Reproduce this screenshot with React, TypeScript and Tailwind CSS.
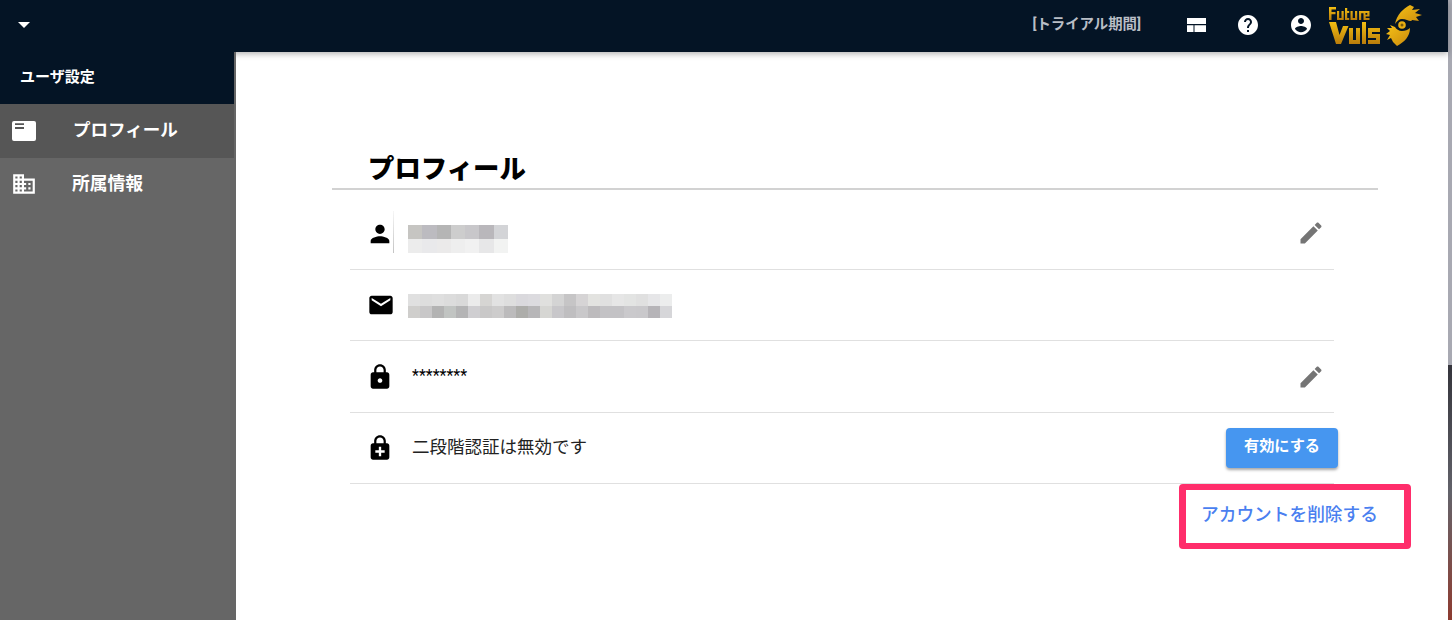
import React from "react";

const font = { fontFamily: '"Roboto", "Noto Sans CJK JP", sans-serif' };

const PersonIcon = () => (
  <svg viewBox="0 0 24 24" className="size-[28px] fill-black mt-[8px] shrink-0">
    <path d="M12 12c2.21 0 4-1.79 4-4s-1.79-4-4-4-4 1.79-4 4 1.79 4 4 4zm0 2c-2.67 0-8 1.34-8 4v2h16v-2c0-2.66-5.33-4-8-4z" />
  </svg>
);

const MailIcon = () => (
  <svg viewBox="0 0 24 24" className="size-[28px] fill-black shrink-0">
    <path d="M20 4H4c-1.1 0-2 .9-2 2v12c0 1.1.9 2 2 2h16c1.1 0 2-.9 2-2V6c0-1.1-.9-2-2-2zm0 4l-8 5-8-5V6l8 5 8-5v2z" />
  </svg>
);

const LockIcon = () => (
  <svg viewBox="0 0 24 24" className="size-[28px] fill-black shrink-0">
    <path d="M18 8h-1V6c0-2.76-2.24-5-5-5S7 3.24 7 6v2H6c-1.1 0-2 .9-2 2v10c0 1.1.9 2 2 2h12c1.1 0 2-.9 2-2V10c0-1.1-.9-2-2-2zm-6 9c-1.1 0-2-.9-2-2s.9-2 2-2 2 .9 2 2-.9 2-2 2zm3.100-9H8.900V6c0-1.710 1.390-3.100 3.100-3.100 1.710 0 3.100 1.390 3.100 3.100v2z" />
  </svg>
);

const EnhancedLockIcon = () => (
  <svg viewBox="0 0 24 24" className="size-[28px] fill-black shrink-0">
    <path d="M18 8h-1V6c0-2.76-2.24-5-5-5S7 3.24 7 6v2H6c-1.100 0-2 .9-2 2v10c0 1.100.9 2 2 2h12c1.100 0 2-.9 2-2V10c0-1.100-.9-2-2-2zM8.900 6c0-1.710 1.390-3.100 3.100-3.100s3.100 1.390 3.100 3.100v2H8.900V6zM16 16h-3v3h-2v-3H8v-2h3v-3h2v3h3v2z" />
  </svg>
);

const PencilIcon = () => (
  <svg viewBox="0 0 24 24" className="size-[28px] fill-[#757575]">
    <path d="M3 17.250V21h3.750L17.810 9.940l-3.750-3.750L3 17.250zM20.710 7.040c.39-.39.39-1.020 0-1.410l-2.340-2.340c-.39-.39-1.020-.39-1.410 0l-1.830 1.830 3.750 3.750 1.830-1.830z" />
  </svg>
);

const Blur = ({ rows, w, h }: { rows: string[][]; w: number; h: number }) => (
  <div className="flex flex-col">
    {rows.map((row, i) => (
      <div key={i} className="flex">
        {row.map((c, j) => (
          <div key={j} style={{ background: c, width: w, height: h }} />
        ))}
      </div>
    ))}
  </div>
);

const nameBlur = [
  ["#c6c5c2", "#bcbbc0", "#b5b5b5", "#cdcdcd", "#c8c7ca", "#b9b7bb", "#d3d4d7"],
  ["#ececec", "#e9e9eb", "#ebeaea", "#eeeeee", "#f1f1f1", "#e7e7e8", "#f2f3f2"],
];

const mailBlur = [
  ["#e0e0e0", "#dddddd", "#dfdfdf", "#dcdcdc", "#d9d9d9", "#ebebeb", "#d6d5d3", "#e2e2e2", "#dedede", "#dad9dd", "#dcdbdf", "#e0e0de", "#d4d4d4", "#c6c5c6", "#d6d4d5", "#e3e3e0", "#e0e0e0", "#e6e6e6", "#e3e4e3", "#e0e0e0", "#e6e6e8", "#eceded"],
  ["#cfcecc", "#c8c7c8", "#b3b3b3", "#c1c4c2", "#b4b4b5", "#cfced1", "#c9c8c8", "#cdcccc", "#bcbbbc", "#adadaa", "#b7b6b8", "#d6d6d3", "#c8c7ca", "#bfbec0", "#c9c8ca", "#bdbbbd", "#c3c2c5", "#c3c2c5", "#cac9cc", "#c9c8cb", "#b6b4b8", "#d6d6d9"],
];

const Logo = () => (
  <svg viewBox="0 0 96 46" className="w-[96px] h-[46px] ml-[14px] mr-[25px] shrink-0">
    <defs>
      <linearGradient id="gold" x1="0" y1="0" x2="0" y2="1">
        <stop offset="0" stopColor="#f4bf12" />
        <stop offset="1" stopColor="#b97c0b" />
      </linearGradient>
      <linearGradient id="blade" x1="0" y1="0" x2="1" y2="1">
        <stop offset="0" stopColor="#f6c117" />
        <stop offset="1" stopColor="#c98a0c" />
      </linearGradient>
    </defs>
    <g fill="url(#gold)">
      <path d="M2 5h7v2.500H4.500v2.500h4v2.200h-4v5.800H2z" />
      <path d="M10 9h2.200v7h2.300V9h2.200v9H10zM18 6h2.200v3h2v2h-2v5h2v2H18zM23.500 9h2.200v7h2.300V9h2.200v9h-6.700zM32 9h5.500v2.200h-3.300V18H32zM38.500 9h4v5.500h-3.800v1.500h3.800v2h-6V9zm0 2v1.700h1.800V11z" />
      <path d="M2 20h7l3.500 13L16 24h5.500l-7.500 18H9z" />
      <path d="M22 26h4v12h3V26h4v16H22zM35 20h4v22h-4zM41 26h12v4h-8v2h8v10H41v-4h8v-2h-8z" />
    </g>
    <g fill="url(#blade)">
      <path d="M68 22C70 12 76 7 83 3l4 2-2 3 8-1-5 4 7 2-6 2 3 4-7-1C84 21 80 17 75 17 72 17 70 19 68 22z" />
      <path d="M83 26C83 35 77 40 70 44l-4-4-2-4-4 2 3-5-4-1 4-3-3-3h5l-2-3 5 2C69 27 72 29 75 29 78 29 81 28 83 26z" />
    </g>
    <circle cx="75" cy="23" r="5" fill="#041425" />
    <circle cx="75" cy="23" r="3.800" fill="#e8ae12" />
    <circle cx="75" cy="23" r="1.500" fill="#7a5a0a" />
  </svg>
);

export default function App() {
  return (
    <div className="h-[620px] w-[1452px] overflow-hidden flex bg-white" style={font}>
      <div className="w-[1448px] shrink-0 flex flex-col">
        <header className="h-[52px] shrink-0 bg-[#041425] flex items-center pb-[2px] z-10 shadow-[0_2px_6px_rgba(0,0,0,0.3)]">
          <div className="ml-[18px] w-0 h-0 border-x-[6px] border-x-transparent border-t-[6px] border-t-white" />
          <span className="ml-auto text-[14.4px] font-bold text-[#b9bec6]">[トライアル期間]</span>
          <svg viewBox="0 0 24 24" className="size-[24px] ml-[44px] fill-white">
            <path d="M2 5h19v6H2zM2 12.300h6.500V19H2zM9.500 12.300H21V19H9.500z" />
          </svg>
          <svg viewBox="0 0 24 24" className="size-[24px] ml-[27px] fill-white">
            <path d="M12 2C6.480 2 2 6.480 2 12s4.480 10 10 10 10-4.480 10-10S17.520 2 12 2zm1 17h-2v-2h2v2zm2.070-7.750l-.9.920C13.450 12.900 13 13.500 13 15h-2v-.5c0-1.100.45-2.100 1.170-2.830l1.240-1.260c.37-.36.59-.86.59-1.410 0-1.100-.9-2-2-2s-2 .9-2 2H8c0-2.210 1.790-4 4-4s4 1.790 4 4c0 .88-.36 1.680-.93 2.250z" />
          </svg>
          <svg viewBox="0 0 24 24" className="size-[24px] ml-[29px] fill-white">
            <path d="M12 2C6.480 2 2 6.480 2 12s4.480 10 10 10 10-4.480 10-10S17.520 2 12 2zm0 3c1.660 0 3 1.340 3 3s-1.340 3-3 3-3-1.340-3-3 1.340-3 3-3zm0 14.200c-2.500 0-4.710-1.280-6-3.220.03-1.990 4-3.080 6-3.080 1.990 0 5.970 1.090 6 3.080-1.290 1.940-3.500 3.220-6 3.220z" />
          </svg>
          <Logo />
        </header>

        <div className="flex flex-1 min-h-0">
          <aside className="w-[236px] shrink-0 bg-[#666666] flex flex-col z-20">
            <div className="w-[234px] h-[52px] bg-[#041425] flex items-center pl-[20px] pb-[2px] text-[15px] font-bold text-white">ユーザ設定</div>
            <div className="w-[234px] h-[54px] bg-[#565656] flex items-center text-white">
              <svg viewBox="0 0 24 20" className="ml-[12px] w-[24px] h-[20px] fill-white">
                <path fillRule="evenodd" d="M2 0h20a2 2 0 0 1 2 2v16a2 2 0 0 1-2 2H2a2 2 0 0 1-2-2V2a2 2 0 0 1 2-2zm1 2.300V4h9V2.300zM3 6v2h9V6z" />
              </svg>
              <span className="ml-[37px] text-[17.500px] font-bold pb-[2px]">プロフィール</span>
            </div>
            <div className="h-[52px] flex items-center text-white">
              <svg viewBox="0 0 24 24" className="ml-[11px] size-[26px] fill-white">
                <path d="M12 7V3H2v18h20V7H12zM6 19H4v-2h2v2zm0-4H4v-2h2v2zm0-4H4V9h2v2zm0-4H4V5h2v2zm4 12H8v-2h2v2zm0-4H8v-2h2v2zm0-4H8V9h2v2zm0-4H8V5h2v2zm10 12h-8v-2h2v-2h-2v-2h2v-2h-2V9h8v10zm-2-8h-2v2h2v-2zm0 4h-2v2h2v-2z" />
              </svg>
              <span className="ml-[35px] text-[17.800px] font-bold">所属情報</span>
            </div>
          </aside>

          <main className="flex-1 min-w-0 bg-white pt-[99px] pl-[96px] pr-[70px]">
            <h1 className="pl-[36px] text-[26.400px] font-black leading-[37px] text-black h-[37px]">プロフィール</h1>
            <div className="h-[2px] bg-[#d2d2d2]" />
            <div className="ml-[18px] mr-[44px]">
              <div className="h-[80px] border-b border-b-[#e0e0e0] flex items-center pl-[16px] pr-[9px]">
                <PersonIcon />
                <div className="-ml-[1px] mt-[5px] w-[1px] h-[42px] bg-linear-to-b from-[#f6f6f6] to-[#c4c4c4]" />
                <div className="ml-[14px] mt-[18px]"><Blur rows={nameBlur} w={14.3} h={14} /></div>
                <div className="ml-auto mt-[6px]"><PencilIcon /></div>
              </div>
              <div className="h-[71px] border-b border-b-[#e0e0e0] flex items-center pl-[17px] pr-[9px]">
                <MailIcon />
                <div className="ml-[13px] mt-[1px]"><Blur rows={mailBlur} w={12} h={12} /></div>
              </div>
              <div className="h-[72px] border-b border-b-[#e0e0e0] flex items-center pl-[16px] pr-[9px]">
                <LockIcon />
                <span className="ml-[18px] text-[16px] text-black -translate-y-[1px]">********</span>
                <div className="ml-auto"><PencilIcon /></div>
              </div>
              <div className="h-[71px] border-b border-b-[#e0e0e0] flex items-center pl-[16px]">
                <EnhancedLockIcon />
                <span className="ml-[18px] text-[17.500px] text-[#222222] pb-[2px]">二段階認証は無効です</span>
                <button className="ml-auto -mr-[4px] w-[112px] h-[40px] rounded bg-[#4696f0] text-white text-[15.200px] font-bold pb-[3px] shadow-[0_2px_3px_rgba(0,0,0,0.35)]">有効にする</button>
              </div>
            </div>
            <div className="flex justify-end -mr-[33px]">
              <div className="w-[232px] h-[65px] border-x-[7px] border-y-[6px] border-[#ff2d6b] rounded flex items-center pl-[15px] pb-[3px]">
                <span className="text-[17.700px] text-[#4a7ff0] font-medium">アカウントを削除する</span>
              </div>
            </div>
          </main>
        </div>
      </div>

      <div className="w-[4px] shrink-0 flex flex-col">
        <div className="h-[365px] bg-[#a8a9b2]" />
        <div className="flex-1 bg-linear-to-b from-[#35353c] via-[#62626a] to-[#8c3a30]" />
      </div>
    </div>
  );
}
